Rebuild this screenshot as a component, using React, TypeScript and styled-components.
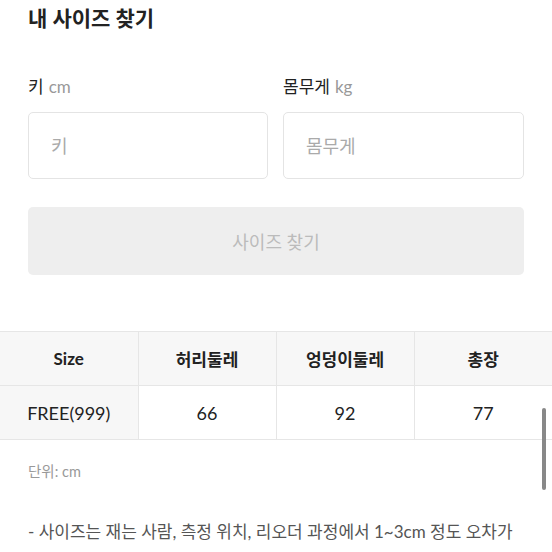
import React from 'react'
import styled, { createGlobalStyle } from 'styled-components'

const Global = createGlobalStyle`
  body {
    margin: 0;
    background: #fff;
    font-family: Lato, "Noto Sans CJK KR", sans-serif;
    color: #222;
  }
  * { box-sizing: border-box; }
`

const Page = styled.div`
  width: 552px;
  height: 552px;
  overflow: hidden;
  position: relative;
`

const Section = styled.div`
  padding: 0 28px;
`

const Title = styled.h2`
  margin: 4px 0 0;
  font-size: 21px;
  line-height: 28px;
  font-weight: 700;
  color: #222;
`

const Fields = styled.div`
  display: grid;
  grid-template-columns: 240px 241px;
  column-gap: 15px;
  margin-top: 44px;
`

const Field = styled.label`
  display: flex;
  flex-direction: column;
  gap: 14px;
`

const Label = styled.span`
  font-size: 17px;
  line-height: 22px;
  font-weight: 400;
  color: #222;
`

const Unit = styled.span`
  color: #999;
  margin-left: 5px;
`

const Input = styled.input`
  height: 67px;
  border: 1px solid #e4e4e4;
  border-radius: 5px;
  padding: 0 22px;
  font-family: inherit;
  font-size: 18px;
  color: #222;
  outline: none;
  &::placeholder {
    color: #aaa;
  }
`

const FindButton = styled.button`
  display: block;
  width: 100%;
  height: 68px;
  margin-top: 28px;
  border: none;
  border-radius: 5px;
  background: #eeeeee;
  color: #bbb;
  font-family: inherit;
  font-size: 18px;
`

const Table = styled.table`
  width: 552px;
  margin-top: 56px;
  border-collapse: collapse;
  table-layout: fixed;
`

const Cell = styled.td<{ $head?: boolean; $shade?: boolean }>`
  height: 54px;
  border: 1px solid #e6e6e6;
  text-align: center;
  font-size: ${p => (p.$head ? '17px' : '18px')};
  font-weight: ${p => (p.$head ? 700 : 400)};
  background: ${p => (p.$shade ? '#f7f7f7' : '#fff')};
  color: #222;
  &:first-child { border-left: none; }
  &:last-child { border-right: none; }
`

const Note = styled.p`
  margin: 22px 0 0;
  font-size: 14.5px;
  line-height: 20px;
  color: #999;
`

const Desc = styled.p`
  margin: 38px 0 0;
  font-size: 17px;
  line-height: 24px;
  color: #555;
  white-space: nowrap;
`

const ScrollThumb = styled.div`
  position: absolute;
  right: 6px;
  top: 408px;
  width: 4px;
  height: 82px;
  border-radius: 2px;
  background: #888;
`

const headers = ['Size', '허리둘레', '엉덩이둘레', '총장']
const values = ['FREE(999)', '66', '92', '77']

export default function App() {
  return (
    <Page>
      <Global />
      <Section>
        <Title>내 사이즈 찾기</Title>
        <Fields>
          <Field>
            <Label>키<Unit>cm</Unit></Label>
            <Input placeholder="키" />
          </Field>
          <Field>
            <Label>몸무게<Unit>kg</Unit></Label>
            <Input placeholder="몸무게" />
          </Field>
        </Fields>
        <FindButton>사이즈 찾기</FindButton>
      </Section>
      <Table>
        <tbody>
          <tr>
            {headers.map(h => (
              <Cell key={h} $head $shade>{h}</Cell>
            ))}
          </tr>
          <tr>
            {values.map((v, i) => (
              <Cell key={v} $shade={i === 0}>{v}</Cell>
            ))}
          </tr>
        </tbody>
      </Table>
      <Section>
        <Note>단위: cm</Note>
        <Desc>- 사이즈는 재는 사람, 측정 위치, 리오더 과정에서 1~3cm 정도 오차가</Desc>
      </Section>
      <ScrollThumb />
    </Page>
  )
}
